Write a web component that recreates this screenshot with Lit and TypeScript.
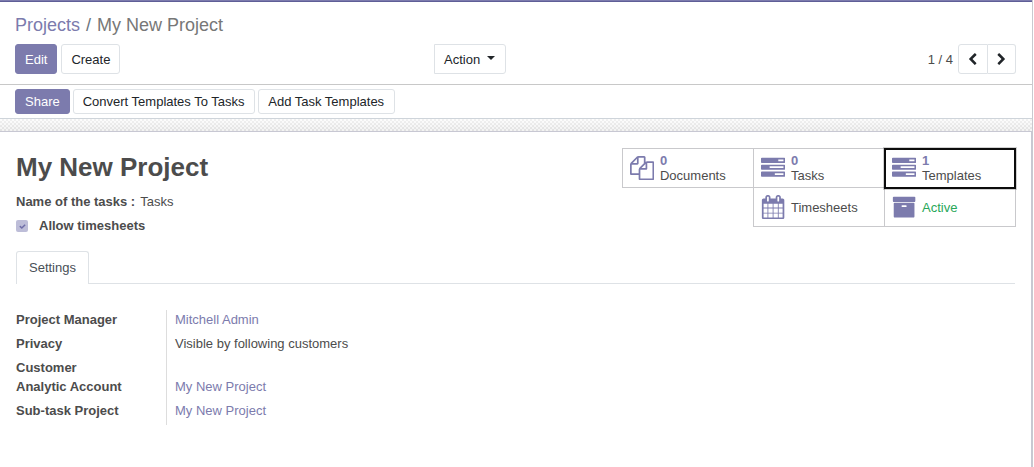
import { LitElement, html, svg, css } from "lit";
import { customElement } from "lit/decorators.js";
import { classMap } from "lit/directives/class-map.js";

const ICONS: Record<string, string> = {
  files:
    "M1696 384q40 0 68 28t28 68v1216q0 40-28 68t-68 28h-960q-40 0-68-28t-28-68v-288h-544q-40 0-68-28t-28-68v-672q0-40 20-88t48-76l408-408q28-28 76-48t88-20h416q40 0 68 28t28 68v328q68-40 128-40h416zm-544 213l-299 299h299v-299zm-640-384l-299 299h299v-299zm196 647l316-316v-416h-384v416q0 40-28 68t-68 28h-416v640h512v-256q0-40 20-88t48-76zm956 804v-1152h-384v416q0 40-28 68t-68 28h-416v640h896z",
  tasks:
    "M1024 1408h640v-128h-640v128zm-384-512h1024v-128h-1024v128zm640-512h384v-128h-384v128zm512 832v256q0 26-19 45t-45 19h-1664q-26 0-45-19t-19-45v-256q0-26 19-45t45-19h1664q26 0 45 19t19 45zm0-512v256q0 26-19 45t-45 19h-1664q-26 0-45-19t-19-45v-256q0-26 19-45t45-19h1664q26 0 45 19t19 45zm0-512v256q0 26-19 45t-45 19h-1664q-26 0-45-19t-19-45v-256q0-26 19-45t45-19h1664q26 0 45 19t19 45z",
  calendar:
    "M192 1664h288v-288h-288v288zm352 0h320v-288h-320v288zm-352-352h288v-320h-288v320zm352 0h320v-320h-320v320zm-352-384h288v-288h-288v288zm736 736h320v-288h-320v288zm-384-736h320v-288h-320v288zm768 736h288v-288h-288v288zm-384-352h320v-320h-320v320zm-352-864v-288q0-13-9.5-22.5t-22.5-9.5h-64q-13 0-22.5 9.5t-9.5 22.5v288q0 13 9.5 22.5t22.5 9.5h64q13 0 22.5-9.5t9.5-22.5zm736 864h288v-320h-288v320zm-384-384h320v-288h-320v288zm384 0h288v-288h-288v288zm32-480v-288q0-13-9.5-22.5t-22.5-9.5h-64q-13 0-22.5 9.5t-9.5 22.5v288q0 13 9.5 22.5t22.5 9.5h64q13 0 22.5-9.5t9.5-22.5zm384-64v1280q0 52-38 90t-90 38h-1408q-52 0-90-38t-38-90v-1280q0-52 38-90t90-38h128v-96q0-66 47-113t113-47h64q66 0 113 47t47 113v96h384v-96q0-66 47-113t113-47h64q66 0 113 47t47 113v96h128q52 0 90 38t38 90z",
  archive:
    "M1088 832q0-26-19-45t-45-19h-256q-26 0-45 19t-19 45 19 45 45 19h256q26 0 45-19t19-45zm576-192v960q0 26-19 45t-45 19h-1408q-26 0-45-19t-19-45v-960q0-26 19-45t45-19h1408q26 0 45 19t19 45zm64-448v256q0 26-19 45t-45 19h-1536q-26 0-45-19t-19-45v-256q0-26 19-45t45-19h1536q26 0 45 19t19 45z",
  left: "M1427 301l-531 531 531 531q19 19 19 45t-19 45l-166 166q-19 19-45 19t-45-19l-742-742q-19-19-19-45t19-45l742-742q19-19 45-19t45 19l166 166q19 19 19 45t-19 45z",
  right:
    "M1363 877l-742 742q-19 19-45 19t-45-19l-166-166q-19-19-19-45t19-45l531-531-531-531q-19-19-19-45t19-45l166-166q19-19 45-19t45 19l742 742q19 19 19 45t-19 45z",
  check:
    "M1671 566q0 40-28 68l-724 724-136 136q-28 28-68 28t-68-28l-136-136-362-362q-28-28-28-68t28-68l136-136q28-28 68-28t68 28l294 295 656-657q28-28 68-28t68 28l136 136q28 28 28 68z",
};

const icon = (name: string) =>
  html`<svg class="icon" viewBox="0 0 1792 1792" aria-hidden="true">${svg`<path d=${ICONS[name]}></path>`}</svg>`;

interface Stat {
  icon: string;
  label: string;
  count?: string;
  focused?: boolean;
  active?: boolean;
}

const STATS: Stat[] = [
  { icon: "files", label: "Documents", count: "0" },
  { icon: "tasks", label: "Tasks", count: "0" },
  { icon: "tasks", label: "Templates", count: "1", focused: true },
  { icon: "calendar", label: "Timesheets" },
  { icon: "archive", label: "Active", active: true },
];

const FIELDS = [
  { label: "Project Manager", value: "Mitchell Admin", link: true },
  { label: "Privacy", value: "Visible by following customers" },
  { label: "Customer", value: "" },
  { label: "Analytic Account", value: "My New Project", link: true },
  { label: "Sub-task Project", value: "My New Project", link: true },
];

@customElement("app-root")
export class AppRoot extends LitElement {
  static styles = css`
    :host {
      display: block;
      height: 467px;
      padding-right: 1px;
      background: #fff;
      color: #4c4c4c;
      font: 13px/19px "Liberation Sans", Arial, sans-serif;
      overflow: hidden;
    }
    :host, * { box-sizing: border-box; }
    .app { height: 467px; display: flex; flex-direction: column; border-right: 1px solid #c9c9cf; }
    .stripe { height: 2px; background: #7c7bad; border-bottom: 1px solid #5f5e97; flex: none; }
    .panel { height: 83px; flex: none; padding: 10px 16px 0 15px; border-bottom: 1px solid #c8c8c8; }
    .crumbs { display: flex; height: 27px; line-height: 27px; font-size: 18px; color: #777; white-space: pre; }
    .crumbs .sep { padding: 0 6px; color: #6c757d; }
    .link { color: #7c7bad; }
    .controls { display: grid; grid-template-columns: 419px 1fr auto; margin-top: 5px; }
    .group { display: flex; gap: 4px; }
    button {
      font: inherit; color: #212529; background: #fff; border: 1px solid #dee2e6;
      border-radius: 3px; padding: 0 9px; height: 30px; white-space: nowrap;
    }
    button.primary { background: #7c7bad; border-color: #7c7bad; color: #fff; }
    .action { justify-self: start; display: flex; align-items: center; width: 72px; border-radius: 0 3px 3px 0; }
    .caret { margin: -3px 0 0 7px; border: 4px solid transparent; border-top-color: #212529; border-bottom: 0; }
    .pager { display: flex; align-items: center; }
    .pager .count { margin-right: 5px; }
    .pager button { width: 30px; padding: 0; display: flex; align-items: center; justify-content: center; }
    .pager .prev { border-radius: 3px 0 0 3px; padding-right: 1px; }
    .pager .next { width: 28px; border-left: 0; border-radius: 0 3px 3px 0; }
    .pager .icon { width: 13px; height: 13px; fill: #212529; }
    .status { height: 34px; flex: none; display: flex; gap: 3px; padding: 4px 15px; border-bottom: 1px solid #ced4da; }
    .status button { height: 25px; }
    .status .wide { padding: 0 9.7px 0 9px; }
    .texture {
      height: 13px; flex: none; border-bottom: 1px solid #c8c8d3;
      background:
        linear-gradient(rgba(255, 255, 255, 0.55), rgba(220, 220, 220, 0.25)),
        repeating-conic-gradient(#e2e2e2 0 25%, #fafafa 0 50%) 0 0 / 4px 4px;
    }
    .sheet { flex: 1; border-right: 1px solid #c8c8d3; padding: 16px 16px 0 16px; }
    .top { display: flex; justify-content: space-between; height: 79px; }
    h1 { margin: 3px 0 0; font-size: 26px; line-height: 32px; font-weight: bold; }
    .line { display: flex; align-items: center; height: 24px; }
    .first { margin-top: 6px; }
    .line b { margin-right: 5px; }
    .check { width: 12px; height: 12px; border-radius: 2px; background: #bdbdd8; display: flex; align-items: center; justify-content: center; margin: 2px 11px 0 0; }
    .check .icon { width: 7px; height: 7px; fill: #6f6ea8; }
    .stats { display: flex; flex-wrap: wrap; justify-content: flex-end; width: 394px; height: 79px; margin-right: -1px; align-content: flex-start; }
    .stat {
      position: relative; width: 132px; height: 40px; margin: 0 0 -1px -1px;
      border: 1px solid #c9c9cc; display: flex; align-items: center; padding-left: 6.6px; line-height: 15px;
    }
    .stats .stat:first-child { margin-left: 0; }
    .stat .icon { width: 24.2px; height: 24.2px; fill: #7c7bad; margin-right: 6.2px; }
    .stat b { display: block; color: #7c7bad; }
    .stat.active { color: #28a75a; }
    .stat.focused::after { content: ""; position: absolute; inset: -1px -1px -2px -1px; border: 2px solid #0c0c0c; box-shadow: 0 0 0 1px rgba(0, 0, 0, 0.18); z-index: 1; }
    .tabs { display: flex; height: 33px; margin-top: 24px; border-bottom: 1px solid #dee2e6; }
    .tab { height: 33px; width: 73px; border: 1px solid #dee2e6; border-bottom: 0; border-radius: 3px 3px 0 0; background: #fff; text-align: center; line-height: 32px; color: #495057; }
    .fields { margin-top: 26px; display: grid; grid-template-columns: 151px 1fr; }
    .label { font-weight: bold; height: 24px; border-right: 1px solid #ddd; }
    .value { padding-left: 8px; }
    .label.short { height: 19px; }
  `;

  render() {
    return html`
      <div class="app">
        <div class="stripe"></div>
        <header class="panel">
          <nav class="crumbs"><span class="link">Projects</span><span class="sep">/</span><span>My New Project</span></nav>
          <div class="controls">
            <div class="group"><button class="primary">Edit</button><button>Create</button></div>
            <button class="action">Action<span class="caret"></span></button>
            <div class="pager">
              <span class="count">1 / 4</span>
              <button class="prev" aria-label="Previous">${icon("left")}</button>
              <button class="next" aria-label="Next">${icon("right")}</button>
            </div>
          </div>
        </header>
        <div class="status">
          <button class="primary">Share</button>
          <button class="wide">Convert Templates To Tasks</button>
          <button class="wide">Add Task Templates</button>
        </div>
        <div class="texture"></div>
        <main class="sheet">
          <div class="top">
            <div>
              <h1>My New Project</h1>
              <div class="line first"><b>Name of the tasks :</b><span>Tasks</span></div>
              <div class="line"><span class="check">${icon("check")}</span><b>Allow timesheets</b></div>
            </div>
            <div class="stats">
              ${STATS.map(
                (s) => html`<div class=${classMap({ stat: true, focused: !!s.focused, active: !!s.active })}>
                  ${icon(s.icon)}
                  <div>${s.count ? html`<b>${s.count}</b>` : ""}<span>${s.label}</span></div>
                </div>`,
              )}
            </div>
          </div>
          <div class="tabs"><div class="tab">Settings</div></div>
          <div class="fields">
            ${FIELDS.map(
              (f) => html`<div class=${classMap({ label: true, short: !f.value })}>${f.label}</div>
                <div class=${classMap({ value: true, link: !!f.link })}>${f.value}</div>`,
            )}
          </div>
        </main>
      </div>
    `;
  }
}
